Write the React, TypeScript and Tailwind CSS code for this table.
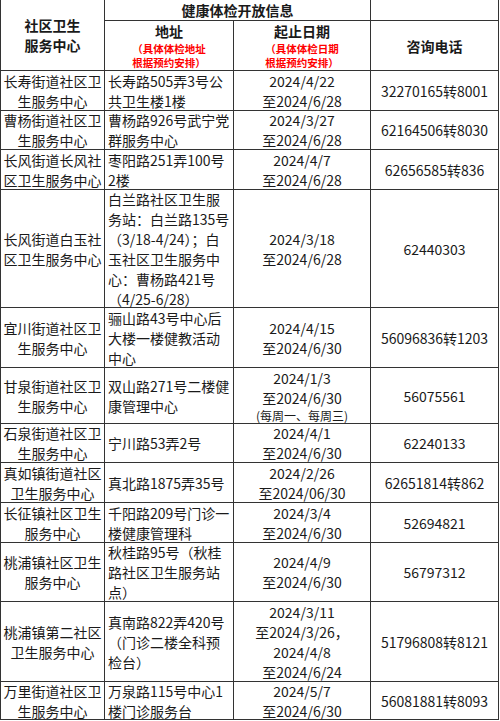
import React from "react";

type Row = {
  name: string[];
  addr: string[];
  date: string[];
  note?: string;
  phone: string;
  h: number;
};

const rows: Row[] = [
  { name: ["长寿街道社区卫", "生服务中心"], addr: ["长寿路505弄3号公", "共卫生楼1楼"], date: ["2024/4/22", "至2024/6/28"], phone: "32270165转8001", h: 39 },
  { name: ["曹杨街道社区卫", "生服务中心"], addr: ["曹杨路926号武宁党", "群服务中心"], date: ["2024/3/27", "至2024/6/28"], phone: "62164506转8030", h: 38 },
  { name: ["长风街道长风社", "区卫生服务中心"], addr: ["枣阳路251弄100号", "2楼"], date: ["2024/4/7", "至2024/6/28"], phone: "62656585转836", h: 39 },
  {
    name: ["长风街道白玉社", "区卫生服务中心"],
    addr: ["白兰路社区卫生服", "务站：白兰路135号", "（3/18-4/24）；白", "玉社区卫生服务中", "心：曹杨路421号", "（4/25-6/28）"],
    date: ["2024/3/18", "至2024/6/28"],
    phone: "62440303",
    h: 117,
  },
  { name: ["宜川街道社区卫", "生服务中心"], addr: ["骊山路43号中心后", "大楼一楼健教活动", "中心"], date: ["2024/4/15", "至2024/6/30"], phone: "56096836转1203", h: 59 },
  { name: ["甘泉街道社区卫", "生服务中心"], addr: ["双山路271号二楼健", "康管理中心"], date: ["2024/1/3", "至2024/6/30"], note: "(每周一、每周三)", phone: "56075561", h: 55 },
  { name: ["石泉街道社区卫", "生服务中心"], addr: ["宁川路53弄2号"], date: ["2024/4/1", "至2024/6/30"], phone: "62240133", h: 38 },
  { name: ["真如镇街道社区", "卫生服务中心"], addr: ["真北路1875弄35号"], date: ["2024/2/26", "至2024/06/30"], phone: "62651814转862", h: 39 },
  { name: ["长征镇社区卫生", "服务中心"], addr: ["千阳路209号门诊一", "楼健康管理科"], date: ["2024/3/4", "至2024/6/30"], phone: "52694821", h: 39 },
  { name: ["桃浦镇社区卫生", "服务中心"], addr: ["秋桂路95号（秋桂", "路社区卫生服务站", "点）"], date: ["2024/4/9", "至2024/6/30"], phone: "56797312", h: 58 },
  {
    name: ["桃浦镇第二社区", "卫生服务中心"],
    addr: ["真南路822弄420号", "（门诊二楼全科预", "检台）"],
    date: ["2024/3/11", "至2024/3/26，", "2024/4/8", "至2024/6/24"],
    phone: "51796808转8121",
    h: 79,
  },
  { name: ["万里街道社区卫", "生服务中心"], addr: ["万泉路115号中心1", "楼门诊服务台"], date: ["2024/5/7", "至2024/6/30"], phone: "56081881转8093", h: 37 },
];

const Lines = ({ lines }: { lines: string[] }) => (
  <>
    {lines.map((l, i) => (
      <div key={i} className="whitespace-nowrap">
        {l}
      </div>
    ))}
  </>
);

export default function App() {
  const rowTemplate = ["20px", "49px", ...rows.map((r) => `${r.h}px`)].join(" ");
  return (
    <div
      className="w-[500px] h-[721px] bg-white text-[#1a1a1a] text-[14px] leading-[20px]"
      style={{ fontFamily: '"Noto Sans CJK SC", "Noto Sans", sans-serif' }}
    >
      <div
        className="w-[499px] bg-[#333333] px-px pb-px grid grid-cols-[103px_128px_136px_127px] gap-px"
        style={{ gridTemplateRows: rowTemplate }}
      >
        <div className="row-span-2 bg-white flex flex-col items-center justify-center font-bold">
          <div>社区卫生</div>
          <div>服务中心</div>
        </div>
        <div className="col-span-2 bg-white flex items-center justify-center font-bold">健康体检开放信息</div>
        <div className="bg-white" />
        <div className="bg-white flex flex-col items-center justify-center">
          <div className="font-bold leading-[21px]">地址</div>
          <div className="text-[10.5px] leading-[14px] font-bold text-[#ff0000] whitespace-nowrap">
            <div>（具体体检地址</div>
            <div>根据预约安排）</div>
          </div>
        </div>
        <div className="bg-white flex flex-col items-center justify-center">
          <div className="font-bold leading-[21px]">起止日期</div>
          <div className="text-[10.5px] leading-[14px] font-bold text-[#ff0000] whitespace-nowrap">
            <div>（具体体检日期</div>
            <div>根据预约安排）</div>
          </div>
        </div>
        <div className="bg-white flex items-center justify-center font-bold">咨询电话</div>

        {rows.map((r, i) => (
          <React.Fragment key={i}>
            <div className="bg-white flex flex-col items-center justify-center text-center">
              <Lines lines={r.name} />
            </div>
            <div className="bg-white flex flex-col justify-center pl-[3px]">
              <Lines lines={r.addr} />
            </div>
            <div className="bg-white flex flex-col items-center justify-center text-center">
              <Lines lines={r.date} />
              {r.note && <div className="text-[12px] leading-[15px] whitespace-nowrap">{r.note}</div>}
            </div>
            <div className="bg-white flex items-center justify-center">{r.phone}</div>
          </React.Fragment>
        ))}
      </div>
    </div>
  );
}
